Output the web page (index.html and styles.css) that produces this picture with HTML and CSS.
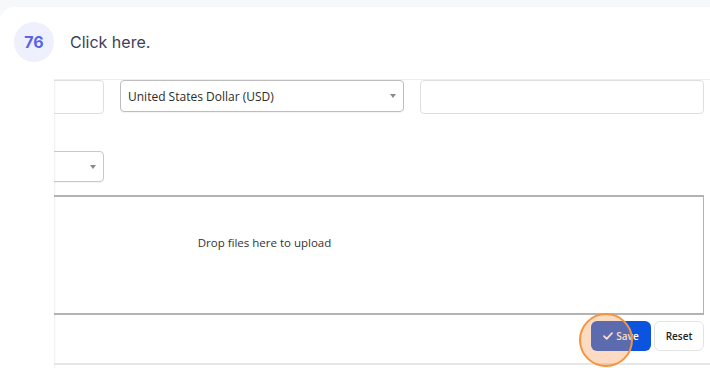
FILE: index.html
```html
<!DOCTYPE html>
<html lang="en">
<head>
    <meta charset="UTF-8">
    <title>Step 76</title>
    <link rel="stylesheet" href="styles.css">
</head>
<body>
    <div class="card">
        <div class="step">
            <div class="badge">76</div>
            <div class="step-text">Click here.</div>
        </div>

        <div class="shot">
            <div class="form-row">
                <div class="input"></div>
                <div class="select">
                    <span>United States Dollar (USD)</span>
                    <span class="caret"></span>
                </div>
                <div class="input"></div>
            </div>

            <div class="form-row second">
                <div class="select short"><span></span><span class="caret"></span></div>
            </div>

            <div class="dropzone">
                <span>Drop files here to upload</span>
            </div>

            <div class="actions">
                <button class="btn save">
                    <svg width="10" height="8" viewBox="0 0 10 8"><path d="M1 4.2 L3.7 6.8 L9 1.2" fill="none" stroke="#fff" stroke-width="1.8" stroke-linecap="round" stroke-linejoin="round"/></svg>
                    Save
                    <span class="highlight"></span>
                </button>
                <button class="btn reset">Reset</button>
            </div>
        </div>
    </div>
</body>
</html>
```

FILE: styles.css
```css
:root {
    --page: #f7f8fa;
    --badge: #eef0fd;
    --badge-text: #5b63e6;
    --text: #3c4257;
    --blue: #0b54e0;
}

* {
    margin: 0;
    padding: 0;
    box-sizing: border-box;
}

body {
    background: var(--page);
    font-family: Inter, "Noto Sans", sans-serif;
    height: 368px;
    overflow: hidden;
}

.card {
    margin-top: 7px;
    background: #fff;
    border-radius: 14px 0 0 0;
    height: 361px;
}

.step {
    display: flex;
    align-items: center;
    gap: 16px;
    padding: 15px 14px 0;
}

.badge {
    width: 40px;
    height: 40px;
    border-radius: 50%;
    background: var(--badge);
    color: var(--badge-text);
    font-weight: 700;
    font-size: 16px;
    display: flex;
    align-items: center;
    justify-content: center;
}

.step-text {
    font-size: 16px;
    color: var(--text);
}

.shot {
    margin: 17px 0 0 54px;
    height: 289px;
    overflow: hidden;
    border-top: 1px solid #eceef1;
    box-shadow: inset 2px 0 2px -1px #eceef1;
    font-family: "Open Sans", sans-serif;
    font-weight: 500;
    color: #2c2c2c;
    position: relative;
}

.form-row {
    display: grid;
    grid-template-columns: 284px 284px 284px;
    gap: 16px;
    margin-left: -234px;
    align-items: start;
}

.input {
    height: 34px;
    border: 1px solid #dedede;
    border-radius: 4px;
}

.select {
    height: 32px;
    border: 1px solid #bdbdbd;
    border-radius: 4px;
    display: flex;
    align-items: center;
    justify-content: space-between;
    padding: 0 7px;
    font-size: 12px;
    box-shadow: 0 1px 1px rgba(0, 0, 0, 0.05);
}

.caret {
    width: 0;
    height: 0;
    border-left: 3px solid transparent;
    border-right: 3px solid transparent;
    border-top: 4px solid #8a8a8a;
}

.form-row.second {
    margin-top: 37px;
}

.select.short {
    height: 31px;
    border-color: #c8c8c8;
}

.dropzone {
    margin: 13px 0 0 -230px;
    width: 880px;
    height: 120px;
    border: 2px solid #b3b3b3;
    border-width: 2px 1.5px 2px 2px;
    display: flex;
    justify-content: center;
    padding: 38px 0 0 0;
    font-size: 11.5px;
    color: #333;
}

.actions {
    display: flex;
    justify-content: flex-end;
    gap: 3px;
    padding: 6px 6px 0 0;
    height: 50px;
    border-bottom: 2px solid #e6e6e6;
}

.btn {
    height: 30px;
    border-radius: 6px;
    font-family: "Open Sans", sans-serif;
    font-weight: 600;
    font-size: 10px;
    cursor: pointer;
}

.save {
    width: 60px;
    background: var(--blue);
    color: #fff;
    border: none;
    display: flex;
    align-items: center;
    justify-content: center;
    gap: 3px;
    position: relative;
}

.reset {
    width: 50px;
    background: #fff;
    border: 1px solid #e3e3e3;
    color: #222;
}

.highlight {
    position: absolute;
    left: -12px;
    top: -8px;
    width: 54px;
    height: 54px;
    border-radius: 50%;
    border: 2px solid #f5943f;
    background: rgba(250, 150, 80, 0.34);
}
```
